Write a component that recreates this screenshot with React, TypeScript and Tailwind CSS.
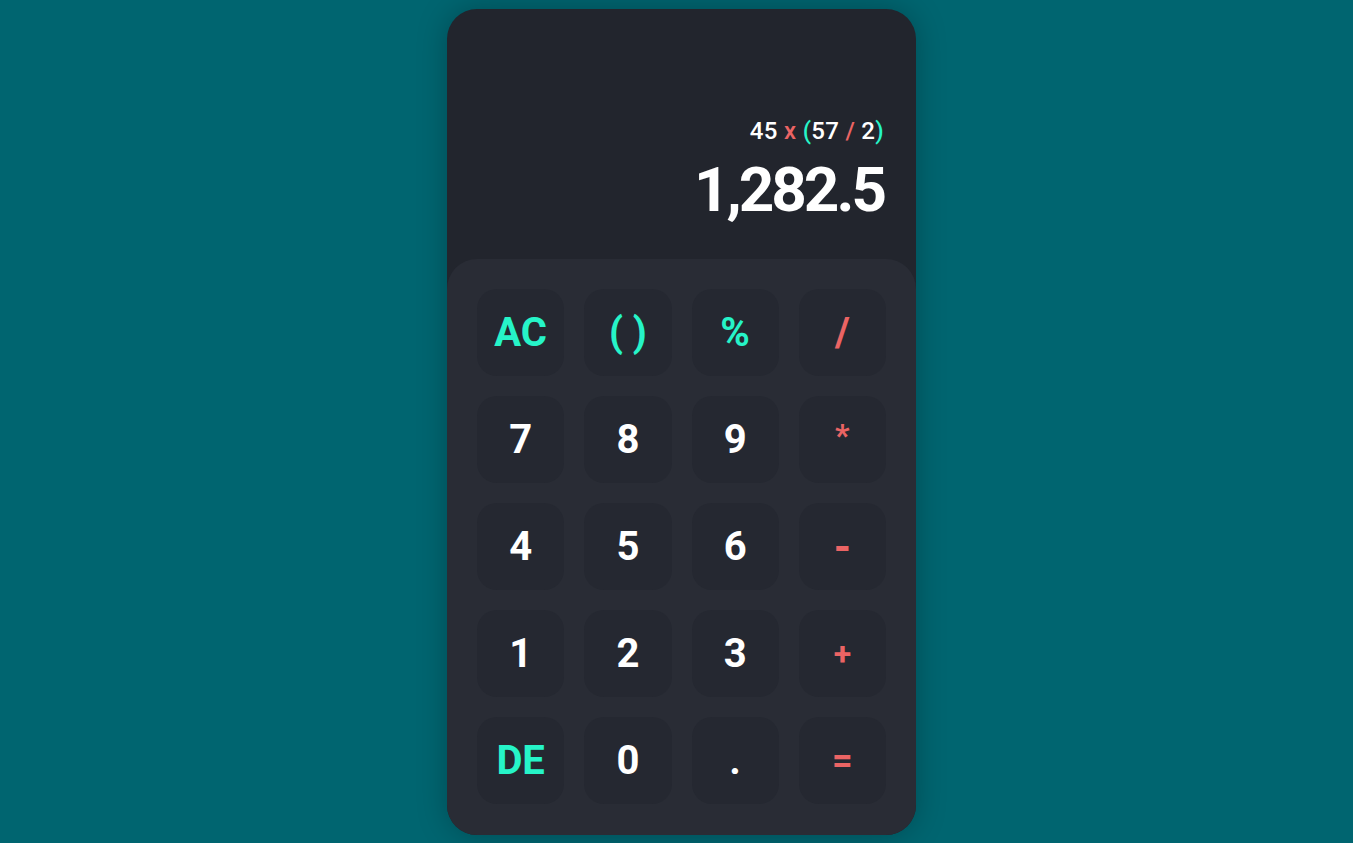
import React from "react"

type Key = { label: string; tone: "num" | "fn" | "op"; size?: string }

const keys: Key[] = [
  { label: "AC", tone: "fn" },
  { label: "( )", tone: "fn" },
  { label: "%", tone: "fn" },
  { label: "/", tone: "op" },
  { label: "7", tone: "num" },
  { label: "8", tone: "num" },
  { label: "9", tone: "num" },
  { label: "*", tone: "op", size: "text-[32px] -translate-y-[5px]" },
  { label: "4", tone: "num" },
  { label: "5", tone: "num" },
  { label: "6", tone: "num" },
  { label: "-", tone: "op", size: "text-[44px]" },
  { label: "1", tone: "num" },
  { label: "2", tone: "num" },
  { label: "3", tone: "num" },
  { label: "+", tone: "op", size: "text-[32px]" },
  { label: "DE", tone: "fn" },
  { label: "0", tone: "num" },
  { label: ".", tone: "num" },
  { label: "=", tone: "op", size: "text-[36px]" },
]

const toneClass = {
  num: "text-white",
  fn: "text-[#26f4c8]",
  op: "text-[#eb6464]",
}

export default function App() {
  return (
    <div
      className="min-h-screen w-full bg-[#006570] flex justify-center pt-[9px] pl-[10px]"
      style={{ fontFamily: 'Roboto, "Liberation Sans", sans-serif' }}
    >
      <div className="w-[469px] h-[826px] rounded-[30px] bg-[#22252d] shadow-[0_0_30px_rgba(0,0,0,0.25)] flex flex-col overflow-hidden">
        <div className="h-[250px] flex flex-col items-end justify-end pr-8 pb-[38px]">
          <div className="text-[24px] font-medium text-white leading-none tracking-[0.3px]">
            45 <span className="text-[#eb6464]">x</span> <span className="text-[#26f4c8]">(</span>57{" "}
            <span className="text-[#eb6464]">/</span> 2<span className="text-[#26f4c8]">)</span>
          </div>
          <div className="mt-[16px] text-[62px] font-bold text-white leading-none tracking-[-3px]">1,282.5</div>
        </div>
        <div className="flex-1 rounded-t-[30px] bg-[#292c35] px-[30px] pt-[30px] grid grid-cols-4 gap-x-5 gap-y-5 content-start">
          {keys.map((k) => (
            <button
              key={k.label}
              className={`h-[87px] rounded-[20px] bg-[#252831] flex items-center justify-center font-bold leading-none ${toneClass[k.tone]}`}
            >
              <span className={k.size ?? "text-[40px]"}>{k.label}</span>
            </button>
          ))}
        </div>
      </div>
    </div>
  )
}
